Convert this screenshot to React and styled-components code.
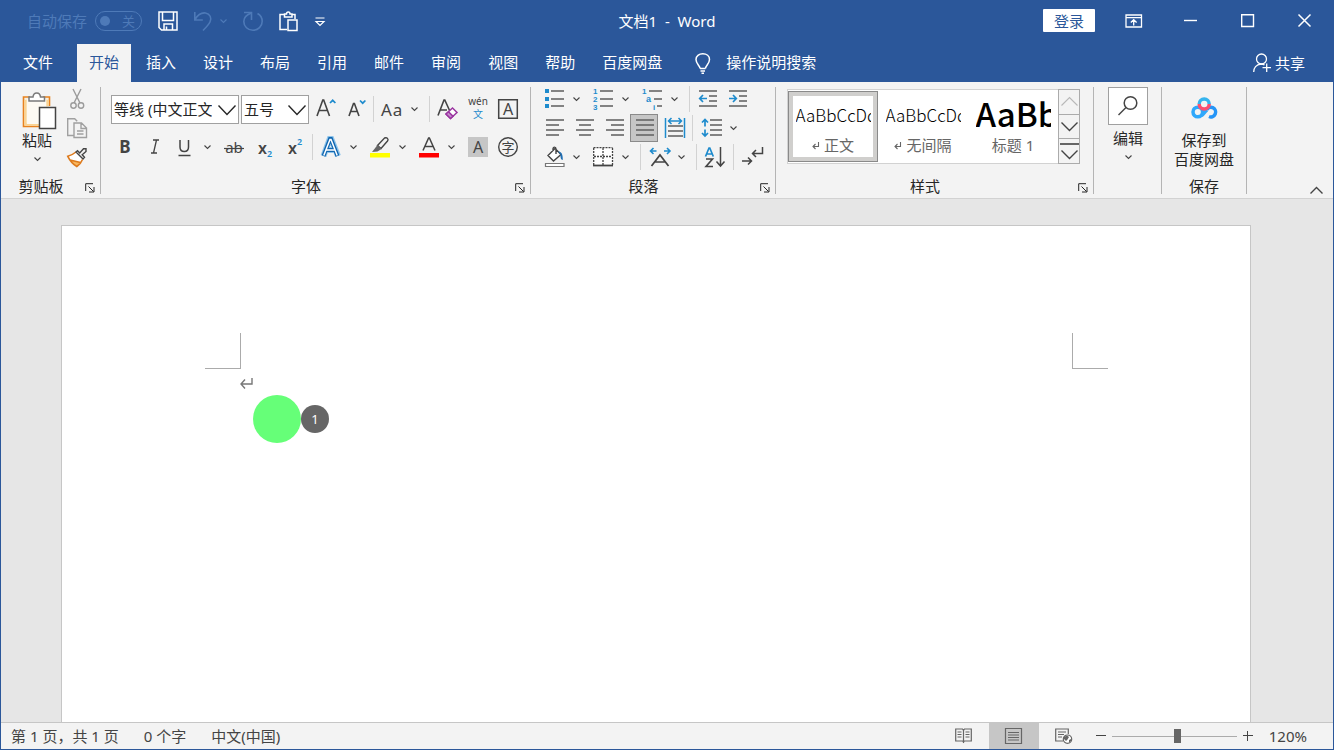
import React, { useState } from "react";
import styled, { createGlobalStyle } from "styled-components";

const blue = "#2b579a";
const accent = "#1e8bcd";
const ink = "#444444";
const dim = "#4e7ab8";

const GlobalStyle = createGlobalStyle`
  * {
    box-sizing: border-box;
  }
  body {
    margin: 0;
  }
  body, button, select, input {
    font-family: "Noto Sans", "Noto Sans CJK SC", sans-serif;
    font-size: 15px;
    color: #262626;
  }
  button {
    border: none;
    background: none;
    padding: 0;
    cursor: pointer;
  }
`;

const Window = styled.div`
  display: flex;
  flex-direction: column;
  min-height: 100vh;
  border: 1px solid ${blue};
  border-top: none;
  background: #e6e6e6;
`;

/* ---------- icons ---------- */

const Svg = styled.svg`
  display: block;
  flex: none;
  width: ${(p) => p.$w || 20}px;
  height: ${(p) => p.$h || p.$w || 20}px;
  overflow: visible;
  fill: none;
  stroke: currentColor;
  stroke-width: 1.4;
  text {
    stroke: none;
    fill: currentColor;
    font-family: "Noto Sans", "Noto Sans CJK SC", sans-serif;
  }
  text.mark {
    fill: ${accent};
    font-family: "Liberation Sans", sans-serif;
    font-weight: 700;
  }
`;

const Chevron = ({ w = 7, h = 4, strokeWidth = 1.1, up }) => (
  <Svg $w={w} $h={h} viewBox={`0 0 ${w} ${h}`} aria-hidden="true">
    <path
      d={up ? `M.5 ${h - 0.5}L${w / 2} .5L${w - 0.5} ${h - 0.5}` : `M.5 .5L${w / 2} ${h - 0.5}L${w - 0.5} .5`}
      strokeWidth={strokeWidth}
    />
  </Svg>
);

const Lines = ({ rows }) => (
  <g stroke="#666666" strokeWidth="1.6">
    {rows.map(([x1, x2, y]) => (
      <path key={y} d={`M${x1} ${y}H${x2}`} />
    ))}
  </g>
);

const icons = {
  save: (
    <g strokeWidth="1.5">
      <path d="M1 1h18v18H3.500L1 16.500z" />
      <path d="M4.500 1v8.500h11V1M6 19v-6h8.500v6M8.500 19v-3.500" />
    </g>
  ),
  undo: (
    <path d="M.8 1v8h8M1 8.500C4 3.500 8 1.500 11.500 2c4.500.7 6.500 5 4.500 9-1 2-4 5.500-7 8.500" strokeWidth="1.600" />
  ),
  redo: (
    <g strokeWidth="1.600">
      <path d="M1 1.500h7.500V9" />
      <path d="M8.500 2C4 3.500.8 6.500.8 10.500c0 5 4 8.800 9.200 8.800s9.200-4 9.200-9c0-3.500-2-6.300-4.700-7.800" />
    </g>
  ),
  pasteSmall: (
    <g strokeWidth="1.500">
      <path d="M8 18.500H1V3.500H6M12.500 3.500H16V8M5.500 6V3h2C7.500.2 11 .2 11 3h2v3z" />
      <path d="M9 9h9v10.500H9z" />
    </g>
  ),
  customize: <path d="M.5 1h9M1 4.500h8L5 8.500z" strokeWidth="1.200" />,
  ribbonMode: (
    <g strokeWidth="1.300">
      <path d="M1 1h15.500v12H1zM1 3.700h15.500M8.700 11.500V6M5.800 8.500L8.700 5.700l2.900 2.800" />
    </g>
  ),
  minimize: <path d="M0 6.500h13" strokeWidth="1.400" />,
  maximize: <path d="M.7.7h11.800v11.800H.7z" strokeWidth="1.400" />,
  close: <path d="M.5.5l12 12M12.500.5l-12 12" strokeWidth="1.500" />,
  bulb: (
    <path
      d="M5 15.500h5.500M5.500 18h4.500M6.500 20.300h2.500M5 15.500c0-3-4-4.500-4-9C1 3 4 .8 7.800.8s6.700 2.200 6.700 5.700c0 4.500-4 6-4 9"
      strokeWidth="1.500"
    />
  ),
  share: (
    <g strokeWidth="1.300">
      <circle cx="8.500" cy="6" r="5" />
      <path d="M.7 19c0-4 2.500-7.500 7.300-8 1.500 0 2.500.3 3.500.8M9.500 14.700H18M13.700 10.500V19" />
    </g>
  ),
  paste: (
    <g>
      <path d="M2 6.500h25v28H2z" fill="#f8ecd4" stroke="none" />
      <path d="M8 5H1.500v29.500H17M21 5h6.500v9" stroke="#e8821e" strokeWidth="1.600" />
      <path d="M3.500 8v24.500H17M25.500 8v6" stroke="#fbd491" strokeWidth="2" />
      <path d="M5 7h19v25H5z" fill="#fdfaf3" stroke="none" />
      <path d="M7 9V5h4c.5-5.500 7-5.500 7.500 0h4v4z" fill="#fff" stroke="#7a7a7a" strokeWidth="1.500" />
      <path d="M17.500 15.500h16v21h-16z" fill="#fff" stroke="#444" strokeWidth="1.500" />
    </g>
  ),
  cut: (
    <g stroke="#9b9b9b" strokeWidth="1.400">
      <path d="M6 0l7 14M14 0L7 14" />
      <circle cx="6.500" cy="16.500" r="2.700" />
      <circle cx="14" cy="16.500" r="2.700" />
    </g>
  ),
  copy: (
    <g stroke="#a0a0a0" strokeWidth="1.400">
      <path d="M7 17.500H.7V.7h7l2.500 2.500M7 5h7.500l5 5v9.500H7zM14 5v5.500h5.500M10 13h6.500M10 16h6.500" />
    </g>
  ),
  painter: (
    <g>
      <path d="M1 9l8-4 6.500 7-5.500 7.500z" fill="#fff" stroke="none" />
      <path d="M2.500 12.500L13.500 15.500 9.500 19.500z" fill="#f8b75e" stroke="none" />
      <path d="M9 5C6.500 7 4 8.500.8 9.300c2 4.200 5 7.700 9 10.200 2.500-1.500 4.500-4 5.700-7M3 13l10.500 2.500" stroke="#dd7a1c" strokeWidth="1.600" />
      <path d="M9 5l7 7 1.500-1.700-2.300-2.500L19 4.500V1.800h-2.500L12.700 6 10.500 3.700z" fill="#f2f2f2" stroke="#444" />
    </g>
  ),
  grow: (
    <g>
      <path d="M2 17L7.800 1h.9L14.500 17M4 11.500h8.500" strokeWidth="1.600" />
      <path d="M15 4l2.700-2.700L20.400 4" stroke={accent} strokeWidth="1.700" />
    </g>
  ),
  shrink: (
    <g>
      <path d="M4 17L8.500 4.500h.9L14 17M5.700 12.500h6.500" strokeWidth="1.600" />
      <path d="M15 1.500l2.700 2.700 2.700-2.700" stroke={accent} strokeWidth="1.700" />
    </g>
  ),
  aa: (
    <text x="-1" y="17" fontSize="17" letterSpacing="1">
      Aa
    </text>
  ),
  clear: (
    <g>
      <path d="M0 16.500L6 1h.8l5 11M2.500 11H9" strokeWidth="1.600" />
      <path d="M8 15l6.500-6 4.500 4.500-6.500 6z" fill="#fff" stroke="#9a35a0" strokeWidth="1.500" />
      <path d="M8 15l2.500-2.300 4.500 4.500-2.500 2.300z" fill="#c58ccb" stroke="#9a35a0" strokeWidth="1.500" />
    </g>
  ),
  phonetic: (
    <g>
      <text x="10" y="6" fontSize="10" textAnchor="middle">
        wén
      </text>
      <text x="10" y="19" fontSize="10" textAnchor="middle" style={{ fill: accent }}>
        文
      </text>
    </g>
  ),
  boxA: (
    <g>
      <path d="M.7.700h18.600v18.600H.7z" strokeWidth="1.500" />
      <text x="10" y="16" fontSize="16" textAnchor="middle">
        A
      </text>
    </g>
  ),
  bold: (
    <text x="10" y="16" fontSize="17" fontWeight="700" textAnchor="middle">
      B
    </text>
  ),
  italic: (
    <path d="M8 3h6M6 16h6M11.500 3L8.500 16" strokeWidth="1.300" />
  ),
  underline: (
    <g>
      <path d="M5 3v7c0 6 8.500 6 8.500 0V3M3.500 18.500h12" strokeWidth="1.500" />
    </g>
  ),
  strike: (
    <g>
      <text x="10" y="16" fontSize="15" textAnchor="middle">
        ab
      </text>
      <path d="M0 11.500h20" strokeWidth="1.200" />
    </g>
  ),
  sub: (
    <g>
      <text x="4" y="17" fontSize="16" fontWeight="600">
        x
      </text>
      <text x="13" y="20" fontSize="9" fontWeight="600" style={{ fill: accent }}>
        2
      </text>
    </g>
  ),
  sup: (
    <g>
      <text x="4" y="17" fontSize="16" fontWeight="600">
        x
      </text>
      <text x="13" y="8" fontSize="9" fontWeight="600" style={{ fill: accent }}>
        2
      </text>
    </g>
  ),
  effects: (
    <g strokeLinejoin="miter">
      <path d="M2.500 19L8.700 2h1.600L17 19M5.500 13h8.500" stroke="#8fc4ea" strokeWidth="6" />
      <path d="M2.500 19L9 2h1L16.500 19M5.500 13h8.500" stroke="#1167b1" strokeWidth="4" />
      <path d="M2.800 18.500L9 2.500h1L16.200 18.500M5.500 13h8.500" stroke="#fff" strokeWidth="1.500" />
    </g>
  ),
  highlight: (
    <g>
      <path d="M7.500 8.500L14.500 1c2.500-1 4.500 1 3 3L11 11.500z" />
      <path d="M7.500 8l4 4-4 2.500-5.500.500z" fill="#666" stroke="none" />
      <path d="M0 16h20v4.500H0z" fill="#ffff00" stroke="none" />
    </g>
  ),
  color: (
    <g>
      <path d="M4 13.500L9.600 1h.8L16 13.500M6 9.500h8" strokeWidth="1.500" />
      <path d="M0 16h20v4.500H0z" fill="#ff0000" stroke="none" />
    </g>
  ),
  shadeA: (
    <g>
      <path d="M0 0h20v20H0z" fill="#c6c6c6" stroke="none" />
      <text x="10" y="16" fontSize="16" textAnchor="middle">
        A
      </text>
    </g>
  ),
  circled: (
    <g>
      <circle cx="10" cy="10" r="9.300" />
      <text x="10" y="15" fontSize="13" textAnchor="middle">
        字
      </text>
    </g>
  ),
  bullets: (
    <g>
      <path d="M1 0h4v4H1zM1 8h4v4H1zM1 15h4v4H1z" fill={accent} stroke="none" />
      <Lines rows={[[7, 20, 2], [7, 20, 10], [7, 20, 17]]} />
    </g>
  ),
  numbers: (
    <g>
      {[1, 2, 3].map((n) => (
        <text key={n} className="mark" x="0" y={n * 8 - 3} fontSize="8">
          {n}
        </text>
      ))}
      <Lines rows={[[7, 20, 2], [7, 20, 10], [7, 20, 17]]} />
    </g>
  ),
  levels: (
    <g>
      <text className="mark" x="0" y="5" fontSize="8">
        1
      </text>
      <text className="mark" x="4" y="13" fontSize="9">
        a
      </text>
      <text className="mark" x="11" y="21" fontSize="8">
        i
      </text>
      <Lines rows={[[7, 20, 2], [12, 20, 10], [15, 20, 17]]} />
    </g>
  ),
  outdent: (
    <g>
      <Lines rows={[[1, 19, 2], [11, 19, 7], [11, 19, 12], [1, 19, 17]]} />
      <path d="M2 9.500h7M5 6L1.700 9.500 5 13" stroke={accent} strokeWidth="1.700" />
    </g>
  ),
  indent: (
    <g>
      <Lines rows={[[1, 19, 2], [11, 19, 7], [11, 19, 12], [1, 19, 17]]} />
      <path d="M1 9.500h7M5 6l3.300 3.500L5 13" stroke={accent} strokeWidth="1.700" />
    </g>
  ),
  left: <Lines rows={[[2, 20, 2], [2, 15, 7], [2, 20, 12], [2, 15, 17]]} />,
  center: <Lines rows={[[2, 20, 2], [5, 17, 7], [2, 20, 12], [5, 17, 17]]} />,
  right: <Lines rows={[[2, 20, 2], [7, 20, 7], [2, 20, 12], [7, 20, 17]]} />,
  justify: <Lines rows={[[2, 20, 2], [2, 20, 7], [2, 20, 12], [2, 20, 17]]} />,
  distribute: (
    <g>
      <Lines rows={[[4, 19, 8], [4, 19, 13], [4, 19, 18]]} />
      <path d="M1.500 0v20M20.500 0v20M4.500 3h13M7.500 0L4.500 3l3 3M14.500 0l3 3-3 3" stroke={accent} strokeWidth="1.500" />
    </g>
  ),
  spacing: (
    <g>
      <Lines rows={[[9, 21, 2], [9, 21, 7], [9, 21, 12], [9, 21, 17]]} />
      <path d="M4 1.500v7M1 4.500l3-3 3 3M4 11.500V18M1 15l3 3 3-3" stroke={accent} strokeWidth="1.700" />
    </g>
  ),
  shading: (
    <g>
      <path d="M4 8.500L11 1.500 17 7.500 9.500 14z M9 4V2c0-2.500 3-2.500 3 0v5" fill="#fff" />
      <path d="M14 4.500c3 0 5 2 4.800 8.500-2 0-2.500-3-2.300-5.500z" fill="#1f6fb5" stroke="none" />
      <path d="M1.500 16.500h18.500v3H1.500z" fill="#fff" stroke="#777" strokeWidth="1.200" />
    </g>
  ),
  borders: (
    <g>
      <path d="M1 1h18v17H1z" fill="#fff" stroke="none" />
      <path d="M.5.700h19M.7 1v17M19.500 1v17M10 1v17M1 9.500h18" strokeDasharray="2 1" strokeWidth="1.300" />
      <path d="M0 18.500h20" strokeWidth="1.800" />
    </g>
  ),
  asian: (
    <g>
      <path d="M2.500 19L11 8l8.500 11M6 15h10" strokeWidth="1.700" />
      <path d="M7.500 4H2M4.500 1l-3 3 3 3M15 4h5.500M18 1l3 3-3 3" stroke={accent} strokeWidth="1.600" />
    </g>
  ),
  sort: (
    <g>
      <path d="M.5 9.500L4 1h.8L8.300 9.500M1.800 7H7" stroke={accent} strokeWidth="1.700" />
      <path d="M1 12h6.500L1 19.500H8" strokeWidth="1.600" />
      <path d="M15.500 0v18.500M11.500 14.500l4 4.500 4-4.500" strokeWidth="1.500" />
    </g>
  ),
  marks: (
    <g strokeWidth="1.500">
      <path d="M20.500 0v6.500H10.500M14 3L10.500 6.500 14 10M0 14h9.500M6 10.500L9.500 14 6 17.500" />
    </g>
  ),
  launcher: (
    <path d="M.7 8V.700H8M3.500 3.500L8.500 8.500M9 4v5H4" strokeWidth="1" />
  ),
  search: (
    <g strokeWidth="1.500">
      <circle cx="12.500" cy="7" r="6.300" />
      <path d="M8 11.500L.5 19" />
    </g>
  ),
  netdisk: (
    <g strokeWidth="3.500">
      <circle cx="6.800" cy="15" r="4.800" stroke="#2fa8fb" />
      <path d="M15.500 13A4.800 4.800 0 1 1 18 19.500" stroke="#2595f7" />
      <path d="M10.500 18.500c2-1.500 3-3.500 5.500-5.500" stroke="#2fa8fb" />
      <path d="M8.200 7a5 5 0 0 1 10 0" stroke="#35b4ee" />
      <path d="M8.200 7a5 5 0 0 0 10 0" stroke="#fb4f71" />
    </g>
  ),
  enter: <path d="M12 0v6H1M5 1.500L1 6l4 4.500" stroke="#777" strokeWidth="1.400" />,
  enterSmall: <path d="M6.500 0v4.500H1M3.500 2L1 4.500 3.500 7" stroke="#666" strokeWidth="1.100" />,
  read: (
    <g stroke="#666" strokeWidth="1.200">
      <path d="M8.500 2.500L7.500 1H.7v12h7l.8 1.200.8-1.200h7V1H9.500zM8.500 2.500V15" />
      <path d="M2.500 4h4M2.500 6.500h4M2.500 9h4M10.500 4h4M10.500 6.500h4M10.500 9h4" />
    </g>
  ),
  print: (
    <g stroke="#666" strokeWidth="1.200">
      <path d="M.5.5h16v15H.5zM3 4.500h11M3 7h11M3 9.500h11M3 12h11" />
    </g>
  ),
  web: (
    <g stroke="#666" strokeWidth="1.200">
      <path d="M8 13H.7V1h12.600v5M3 4h8M3 6.500h6M3 9h4" />
      <circle cx="12.500" cy="11.200" r="4.200" fill="#fff" />
      <path d="M9 9l3-1.500 2 1.500-1.500 2.500L11 13l-2-2zM14 12l2-1v2l-2 2z" fill="#666" stroke="none" />
    </g>
  ),
};

const Icon = ({ name, w = 20, h }) => (
  <Svg $w={w} $h={h || w} viewBox={`0 0 ${w} ${h || w}`} aria-hidden="true">
    {icons[name]}
  </Svg>
);

/* ---------- title bar ---------- */

const TitleBar = styled.header`
  display: grid;
  grid-template-columns: 1fr auto 1fr;
  align-items: center;
  height: 41px;
  background: ${blue};
  color: #fff;
`;

const QuickAccess = styled.div`
  display: flex;
  align-items: center;
  gap: 16px;
  padding-left: 26px;
`;

const QuickButton = styled.button`
  display: flex;
  align-items: center;
  gap: 8px;
  color: ${(p) => (p.disabled ? dim : "#fff")};
`;

const AutoSave = styled.label`
  display: flex;
  align-items: center;
  gap: 8px;
  color: ${dim};
`;

const Toggle = styled.span`
  display: flex;
  align-items: center;
  justify-content: space-between;
  width: 47px;
  height: 20px;
  padding: 0 6px 0 4px;
  border: 1px solid ${dim};
  border-radius: 10px;
  font-size: 13px;
  input {
    appearance: none;
    width: 10px;
    height: 10px;
    margin: 0;
    border-radius: 50%;
    background: ${dim};
  }
`;

const DocTitle = styled.div`
  white-space: pre;
`;

const WindowControls = styled.div`
  display: flex;
  align-items: center;
  justify-content: flex-end;
`;

const LoginButton = styled.button`
  width: 52px;
  height: 23px;
  margin-right: 10px;
  border-radius: 1px;
  background: #fff;
  color: ${blue};
`;

const ControlButton = styled.button`
  display: flex;
  align-items: center;
  justify-content: center;
  width: 57px;
  height: 41px;
  color: #fff;
`;

/* ---------- tabs ---------- */

const TabBar = styled.nav`
  display: flex;
  gap: 3px;
  height: 41px;
  padding: 3px 28px 0 10px;
  background: ${blue};
`;

const Tab = styled.button`
  padding: 0 12px 4px;
  margin-right: ${(p) => (p.$file ? 9 : 0)}px;
  background: ${(p) => (p.$active ? "#f3f3f3" : "transparent")};
  color: ${(p) => (p.$active ? blue : "#fff")};
`;

const TellMe = styled.button`
  display: flex;
  align-items: center;
  gap: 16px;
  padding: 0 18px;
  color: #fff;
  span {
    padding-bottom: 4px;
  }
`;

const ShareButton = styled.button`
  display: flex;
  align-items: center;
  gap: 4px;
  margin-left: auto;
  color: #fff;
  span {
    padding-bottom: 2px;
  }
`;

/* ---------- ribbon ---------- */

const Ribbon = styled.div`
  display: flex;
  align-items: stretch;
  padding: 5px 0 4px;
  border-bottom: 1px solid #d2d2d2;
  background: #f3f3f3;
`;

const GroupBox = styled.section`
  display: flex;
  flex-direction: column;
  height: 107px;
  border-right: 1px solid #b4b4b4;
`;

const GroupBody = styled.div`
  display: flex;
  flex: 1;
  align-items: flex-start;
  gap: ${(p) => p.$gap || 0}px;
  padding: ${(p) => p.$pad};
`;

const GroupFooter = styled.footer`
  display: flex;
  align-items: flex-end;
  height: 16px;
`;

const GroupLabel = styled.div`
  flex: 1;
  line-height: 15px;
  text-align: center;
`;

const Launcher = styled.button`
  display: flex;
  width: 19px;
  height: 11px;
  padding-left: 4px;
`;

const Rows = styled.div`
  display: flex;
  flex-direction: column;
  gap: ${(p) => p.$gap}px;
`;

const Row = styled.div`
  display: flex;
  align-items: center;
  gap: 2px;
  height: ${(p) => p.$height}px;
`;

const ToolButton = styled.button`
  display: flex;
  flex: none;
  align-items: center;
  justify-content: center;
  width: 28px;
  height: 28px;
  border: 1px solid ${(p) => (p.$active ? "#8a8a8a" : "transparent")};
  background: ${(p) => (p.$active ? "#c6c6c6" : "transparent")};
  color: ${ink};
`;

const Split = styled.div`
  display: flex;
  align-items: center;
`;

const CaretButton = styled.button`
  display: flex;
  align-items: center;
  width: 19px;
  height: 28px;
  padding-left: 5px;
  color: ${ink};
`;

const Separator = styled.span`
  width: 1px;
  height: 26px;
  margin: 0 2px;
  background: #d2d2d2;
`;

const SelectBox = styled.label`
  position: relative;
  display: block;
  width: ${(p) => p.$width}px;
  height: 29px;
  select {
    appearance: none;
    width: 100%;
    height: 100%;
    padding: 0 26px 0 2px;
    border: 1px solid #a0a0a0;
    border-radius: 0;
    background: #fff;
    outline: none;
  }
  svg {
    position: absolute;
    top: 10px;
    right: 3px;
    pointer-events: none;
  }
`;

const BigButton = styled.button`
  display: flex;
  flex-direction: column;
  align-items: center;
  gap: ${(p) => p.$gap || 0}px;
  line-height: 19px;
  svg {
    color: ${ink};
  }
`;

const PasteSlot = styled.span`
  display: flex;
  height: 44px;
  padding: 5px 3px 0 7px;
`;

const SearchBox = styled.span`
  display: flex;
  align-items: center;
  justify-content: center;
  width: 40px;
  height: 38px;
  margin-bottom: 4px;
  border: 1px solid #a0a0a0;
  background: #fff;
`;

const CaretSlot = styled.span`
  display: flex;
  align-items: center;
  height: 18px;
`;

const Gallery = styled.div`
  display: flex;
  height: 75px;
  border: 1px solid #d2d2d2;
  background: #fff;
`;

const StyleCell = styled.button`
  display: flex;
  flex-direction: column;
  align-items: center;
  width: 90px;
  height: 71px;
  margin-top: 1px;
  padding: 2px;
  border: 1px solid ${(p) => (p.$active ? "#8a8a8a" : "transparent")};
  box-shadow: ${(p) => (p.$active ? "inset 0 0 0 4px #d0cfcd" : "none")};
`;

const StyleSample = styled.span`
  width: 75px;
  height: 41px;
  overflow: hidden;
  font-family: "Noto Sans CJK SC", sans-serif;
  font-size: ${(p) => (p.$large ? 33 : 17)}px;
  font-weight: ${(p) => (p.$large ? 500 : 300)};
  line-height: ${(p) => (p.$large ? 38 : 42)}px;
  text-align: left;
  white-space: nowrap;
  color: #000;
`;

const StyleName = styled.span`
  display: flex;
  align-items: center;
  gap: 5px;
  line-height: 20px;
  color: #666;
`;

const GalleryNav = styled.div`
  display: flex;
  flex-direction: column;
  width: 22px;
  margin: -1px -1px -1px 0;
  border: 1px solid #ababab;
  background: #f3f3f3;
`;

const GalleryNavButton = styled.button`
  display: flex;
  flex: 1;
  flex-direction: column;
  align-items: center;
  justify-content: center;
  gap: 5px;
  color: ${(p) => (p.disabled ? "#b8b8b8" : ink)};
  & + & {
    border-top: 1px solid #ababab;
  }
`;

const MoreBar = styled.span`
  width: 19px;
  height: 2px;
  background: #666;
`;

const CollapseButton = styled.button`
  display: flex;
  align-items: flex-end;
  margin-left: auto;
  padding: 0 10px 0;
  color: ${ink};
`;

/* ---------- document ---------- */

const Workspace = styled.main`
  display: flex;
  flex: 1;
  padding: 26px 82px 0 60px;
`;

const Page = styled.article`
  position: relative;
  flex: 1;
  padding: 107px 142px 0 143px;
  border: 1px solid #c6c6c6;
  border-bottom: none;
  background: #fff;
`;

const Margins = styled.div`
  display: flex;
  justify-content: space-between;
`;

const Corner = styled.span`
  width: 36px;
  height: 36px;
  border-bottom: 1px solid #ababab;
  border-left: ${(p) => (p.$side === "right" ? "1px solid #ababab" : "none")};
  border-right: ${(p) => (p.$side === "left" ? "1px solid #ababab" : "none")};
`;

const Paragraph = styled.p`
  margin: 0;
  padding: 9px 35px;
`;

const ClickMarker = styled.div`
  position: absolute;
  top: 169px;
  left: 191px;
  display: flex;
  align-items: center;
`;

const ClickDot = styled.span`
  width: 48px;
  height: 48px;
  border-radius: 50%;
  background: #66ff78;
`;

const ClickCount = styled.span`
  width: 28px;
  height: 28px;
  border-radius: 50%;
  background: #666666;
  color: #fff;
  font-size: 13px;
  line-height: 28px;
  text-align: center;
`;

/* ---------- status bar ---------- */

const StatusBar = styled.footer`
  display: flex;
  align-items: stretch;
  height: 27px;
  border-top: 1px solid #c6c6c6;
  background: #f3f3f3;
  line-height: 27px;
`;

const StatusInfo = styled.div`
  display: flex;
  flex: 1;
  gap: 25px;
  padding-left: 10px;
  color: ${ink};
`;

const ViewButton = styled.button`
  display: flex;
  align-items: center;
  justify-content: center;
  width: 50px;
  background: ${(p) => (p.$active ? "#c6c6c6" : "transparent")};
`;

const Zoom = styled.div`
  display: flex;
  align-items: center;
  gap: 6px;
  padding: 0 26px 0 7px;
  color: ${ink};
`;

const ZoomStep = styled.button`
  display: flex;
  color: ${ink};
`;

const ZoomSlider = styled.input`
  appearance: none;
  width: 125px;
  height: 14px;
  margin: 0;
  background: linear-gradient(#ababab, #ababab) center / 100% 1px no-repeat;
  &::-webkit-slider-thumb {
    appearance: none;
    width: 7px;
    height: 14px;
    background: #666666;
  }
`;

const ZoomValue = styled.span`
  padding-left: 10px;
`;

const Tool = ({ name, label, caret, active, onClick }) => {
  const button = (
    <ToolButton aria-label={label} $active={active} onClick={onClick}>
      <Icon name={name} />
    </ToolButton>
  );
  if (!caret) {
    return button;
  }
  return (
    <Split>
      {button}
      <CaretButton aria-label={`${label}选项`}>
        <Chevron />
      </CaretButton>
    </Split>
  );
};

const ToolRow = ({ height, items, children }) => (
  <Row $height={height}>
    {children}
    {items.map((x, i) => (x === "|" ? <Separator key={i} /> : <Tool key={i} {...x} />))}
  </Row>
);

const Group = ({ label, launcher, pad, gap, children }) => (
  <GroupBox aria-label={label || "编辑"}>
    <GroupBody $pad={pad} $gap={gap}>
      {children}
    </GroupBody>
    <GroupFooter>
      <GroupLabel>{label}</GroupLabel>
      {launcher && (
        <Launcher aria-label={`${label}设置`}>
          <Icon name="launcher" w={10} />
        </Launcher>
      )}
    </GroupFooter>
  </GroupBox>
);

const tabs = ["文件", "开始", "插入", "设计", "布局", "引用", "邮件", "审阅", "视图", "帮助", "百度网盘"];

const fontRow1 = [
  { name: "grow", label: "增大字号" },
  { name: "shrink", label: "减小字号" },
  "|",
  { name: "aa", label: "更改大小写", caret: true },
  "|",
  { name: "clear", label: "清除格式" },
  { name: "phonetic", label: "拼音指南" },
  { name: "boxA", label: "字符边框" },
];

const fontRow2 = [
  { name: "bold", label: "加粗" },
  { name: "italic", label: "倾斜" },
  { name: "underline", label: "下划线", caret: true },
  { name: "strike", label: "删除线" },
  { name: "sub", label: "下标" },
  { name: "sup", label: "上标" },
  "|",
  { name: "effects", label: "文本效果", caret: true },
  { name: "highlight", label: "突出显示", caret: true },
  { name: "color", label: "字体颜色", caret: true },
  { name: "shadeA", label: "字符底纹" },
  { name: "circled", label: "带圈字符" },
];

const listRow = [
  { name: "bullets", label: "项目符号", caret: true },
  { name: "numbers", label: "编号", caret: true },
  { name: "levels", label: "多级列表", caret: true },
  "|",
  { name: "outdent", label: "减少缩进" },
  { name: "indent", label: "增加缩进" },
];

const alignments = [
  { name: "left", label: "左对齐" },
  { name: "center", label: "居中" },
  { name: "right", label: "右对齐" },
  { name: "justify", label: "两端对齐" },
  { name: "distribute", label: "分散对齐" },
];

const layoutRow = [
  { name: "shading", label: "底纹", caret: true },
  { name: "borders", label: "边框", caret: true },
  "|",
  { name: "asian", label: "中文版式", caret: true },
  "|",
  { name: "sort", label: "排序" },
  "|",
  { name: "marks", label: "显示编辑标记" },
];

const styleList = [
  { name: "正文", sample: "AaBbCcDd", mark: true },
  { name: "无间隔", sample: "AaBbCcDd", mark: true },
  { name: "标题 1", sample: "AaBb", large: true },
];

const views = [
  { name: "read", label: "阅读视图" },
  { name: "print", label: "页面视图" },
  { name: "web", label: "Web 版式视图" },
];

export default function App() {
  const [tab, setTab] = useState("开始");
  const [align, setAlign] = useState("justify");
  const [style, setStyle] = useState("正文");
  const [view, setView] = useState("print");
  const [zoom, setZoom] = useState(120);

  return (
    <Window>
      <GlobalStyle />
      <TitleBar>
        <QuickAccess>
          <AutoSave>
            自动保存
            <Toggle>
              <input type="checkbox" disabled />关
            </Toggle>
          </AutoSave>
          <QuickButton aria-label="保存">
            <Icon name="save" />
          </QuickButton>
          <QuickButton aria-label="撤消" disabled>
            <Icon name="undo" w={18} h={20} />
            <Chevron />
          </QuickButton>
          <QuickButton aria-label="重复" disabled>
            <Icon name="redo" />
          </QuickButton>
          <QuickButton aria-label="粘贴">
            <Icon name="pasteSmall" />
          </QuickButton>
          <QuickButton aria-label="自定义快速访问工具栏">
            <Icon name="customize" w={10} h={8} />
          </QuickButton>
        </QuickAccess>
        <DocTitle>{"文档1  -  Word"}</DocTitle>
        <WindowControls>
          <LoginButton>登录</LoginButton>
          <ControlButton aria-label="功能区显示选项">
            <Icon name="ribbonMode" w={17} h={14} />
          </ControlButton>
          <ControlButton aria-label="最小化">
            <Icon name="minimize" w={13} />
          </ControlButton>
          <ControlButton aria-label="最大化">
            <Icon name="maximize" w={13} />
          </ControlButton>
          <ControlButton aria-label="关闭">
            <Icon name="close" w={13} />
          </ControlButton>
        </WindowControls>
      </TitleBar>

      <TabBar>
        {tabs.map((x) => (
          <Tab key={x} $file={x === "文件"} $active={x === tab} onClick={() => setTab(x)}>
            {x}
          </Tab>
        ))}
        <TellMe>
          <Icon name="bulb" w={15} h={21} />
          <span>操作说明搜索</span>
        </TellMe>
        <ShareButton>
          <Icon name="share" w={18} h={20} />
          <span>共享</span>
        </ShareButton>
      </TabBar>

      <Ribbon>
        <Group label="剪贴板" launcher pad="0 9px 0 14px" gap={4}>
          <BigButton>
            <PasteSlot>
              <Icon name="paste" w={34} h={37} />
            </PasteSlot>
            粘贴
            <CaretSlot>
              <Chevron />
            </CaretSlot>
          </BigButton>
          <Rows $gap={5}>
            <ToolRow height={24} items={[{ name: "cut", label: "剪切" }]} />
            <ToolRow height={24} items={[{ name: "copy", label: "复制" }]} />
            <ToolRow height={24} items={[{ name: "painter", label: "格式刷" }]} />
          </Rows>
        </Group>

        <Group label="字体" launcher pad="7px 8px 0 10px">
          <Rows $gap={8}>
            <ToolRow height={30} items={fontRow1}>
              <SelectBox $width={128}>
                <select aria-label="字体">
                  <option>等线 (中文正文)</option>
                  <option>宋体</option>
                </select>
                <Chevron w={18} h={10} strokeWidth={1.4} />
              </SelectBox>
              <SelectBox $width={68}>
                <select aria-label="字号">
                  <option>五号</option>
                  <option>四号</option>
                </select>
                <Chevron w={18} h={10} strokeWidth={1.4} />
              </SelectBox>
            </ToolRow>
            <ToolRow height={30} items={fontRow2} />
          </Rows>
        </Group>

        <Group label="段落" launcher pad="0 9px">
          <Rows $gap={5}>
            <ToolRow height={24} items={listRow} />
            <ToolRow
              height={24}
              items={[
                ...alignments.map((x) => ({
                  ...x,
                  active: x.name === align,
                  onClick: () => setAlign(x.name),
                })),
                "|",
                { name: "spacing", label: "行和段落间距", caret: true },
              ]}
            />
            <ToolRow height={24} items={layoutRow} />
          </Rows>
        </Group>

        <Group label="样式" launcher pad="2px 13px 0 11px">
          <Gallery>
            {styleList.map((x) => (
              <StyleCell key={x.name} $active={x.name === style} onClick={() => setStyle(x.name)}>
                <StyleSample $large={x.large}>{x.sample}</StyleSample>
                <StyleName>
                  {x.mark && <Icon name="enterSmall" w={7} />}
                  {x.name}
                </StyleName>
              </StyleCell>
            ))}
            <GalleryNav>
              <GalleryNavButton aria-label="上一行" disabled>
                <Chevron w={17} h={9} up />
              </GalleryNavButton>
              <GalleryNavButton aria-label="下一行">
                <Chevron w={17} h={9} strokeWidth={1.4} />
              </GalleryNavButton>
              <GalleryNavButton aria-label="其他">
                <MoreBar />
                <Chevron w={17} h={9} strokeWidth={1.4} />
              </GalleryNavButton>
            </GalleryNav>
          </Gallery>
        </Group>

        <Group pad="0 13px 0 14px">
          <BigButton>
            <SearchBox>
              <Icon name="search" />
            </SearchBox>
            编辑
            <CaretSlot>
              <Chevron />
            </CaretSlot>
          </BigButton>
        </Group>

        <Group label="保存" pad="10px 12px 0">
          <BigButton $gap={11}>
            <Icon name="netdisk" w={26} h={23} />
            <span>
              保存到
              <br />
              百度网盘
            </span>
          </BigButton>
        </Group>

        <CollapseButton aria-label="折叠功能区">
          <Chevron w={13} h={7} up strokeWidth={1.4} />
        </CollapseButton>
      </Ribbon>

      <Workspace>
        <Page>
          <Margins>
            <Corner $side="left" />
            <Corner $side="right" />
          </Margins>
          <Paragraph>
            <Icon name="enter" w={13} h={11} />
          </Paragraph>
          <ClickMarker>
            <ClickDot />
            <ClickCount>1</ClickCount>
          </ClickMarker>
        </Page>
      </Workspace>

      <StatusBar>
        <StatusInfo>
          <span>第 1 页，共 1 页</span>
          <span>0 个字</span>
          <span>中文(中国)</span>
        </StatusInfo>
        {views.map((x) => (
          <ViewButton key={x.name} aria-label={x.label} $active={x.name === view} onClick={() => setView(x.name)}>
            <Icon name={x.name} w={17} h={16} />
          </ViewButton>
        ))}
        <Zoom>
          <ZoomStep aria-label="缩小" onClick={() => setZoom(zoom - 10)}>
            <Svg $w={10} viewBox="0 0 10 10">
              <path d="M0 4.500h10" strokeWidth="1" />
            </Svg>
          </ZoomStep>
          <ZoomSlider
            type="range"
            aria-label="显示比例"
            min="10"
            max="220"
            value={zoom}
            onChange={(e) => setZoom(Number(e.target.value))}
          />
          <ZoomStep aria-label="放大" onClick={() => setZoom(zoom + 10)}>
            <Svg $w={10} viewBox="0 0 10 10">
              <path d="M0 4.500h10M4.500 0v10" strokeWidth="1" />
            </Svg>
          </ZoomStep>
          <ZoomValue>{zoom}%</ZoomValue>
        </Zoom>
      </StatusBar>
    </Window>
  );
}
